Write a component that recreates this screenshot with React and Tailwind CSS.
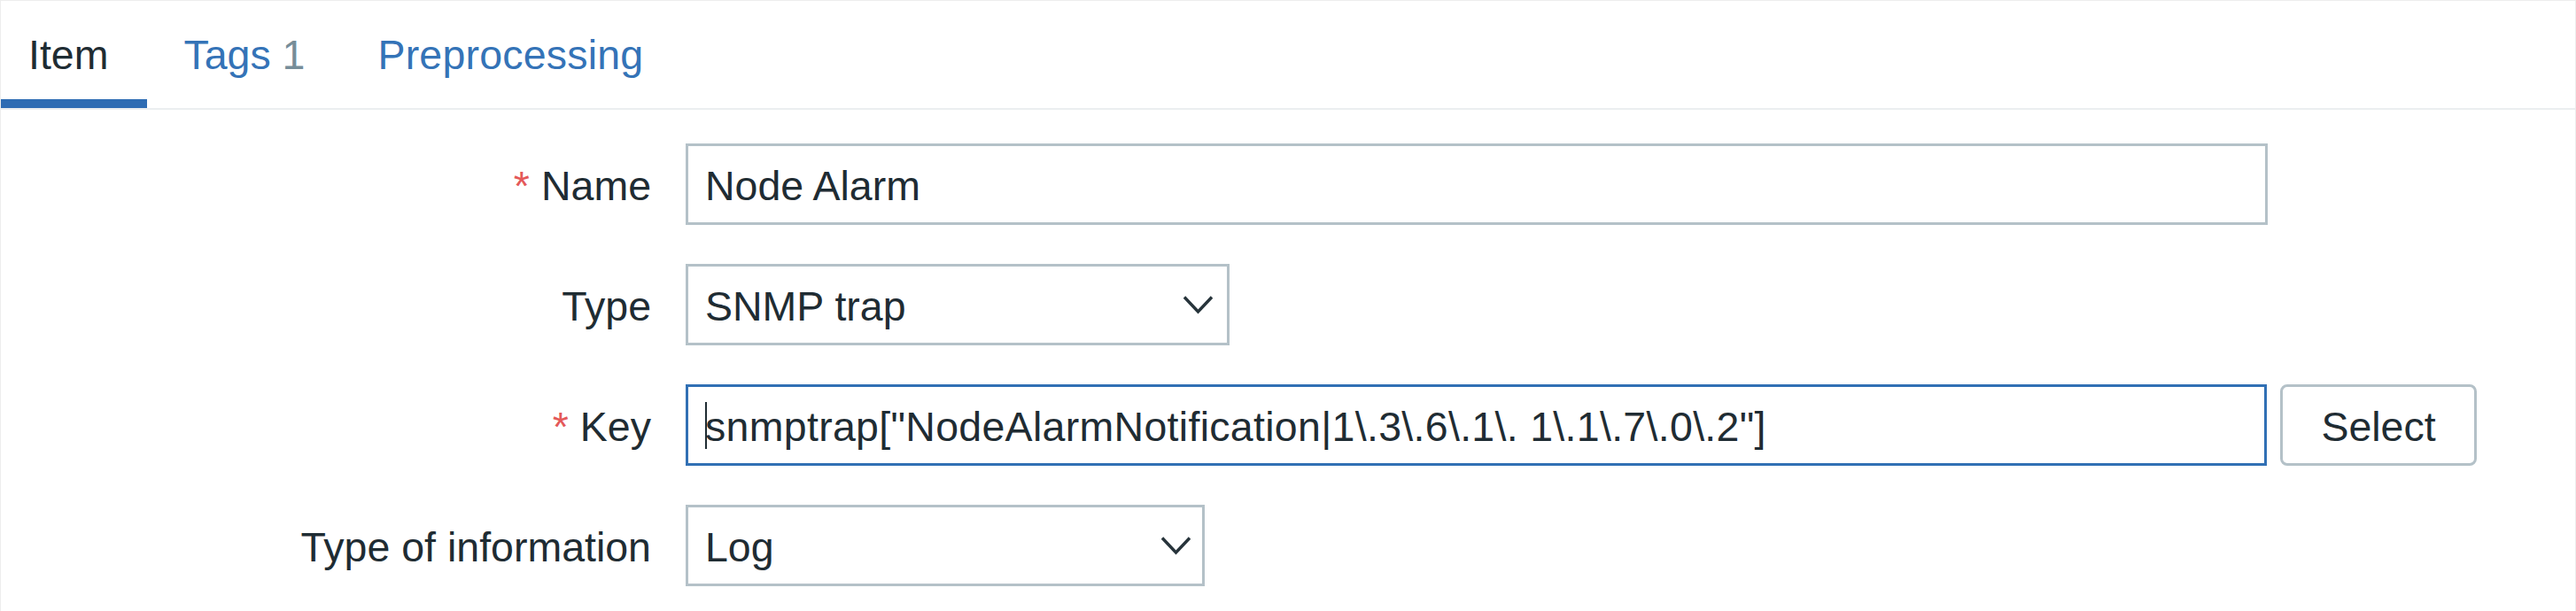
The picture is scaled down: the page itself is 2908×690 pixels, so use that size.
import React from 'react';

const Chevron = () => (
    <svg width="35" height="22" viewBox="0 0 35 22" fill="none" className="-mt-[6px] shrink-0">
        <path d="M2 2.5 L17.5 19 L33 2.5" stroke="#27343b" strokeWidth="3.4" />
    </svg>
);

const Label = ({ children, required }) => (
    <div className="flex h-[92px] items-center justify-end whitespace-nowrap pt-[6px]">
        {required && <span className="mr-[13px] text-[#e45959]">*</span>}
        <span>{children}</span>
    </div>
);

const Select = ({ value, width }) => (
    <div className={`flex h-[92px] items-center justify-between border-[3px] border-[#b4c1c8] bg-white pl-[19px] pt-[6px] ${width}`}>
        <span>{value}</span>
        <Chevron />
    </div>
);

const App = () => {
    return (
        <div className="h-[690px] w-full overflow-hidden border-x border-t border-[#ededed] bg-white font-['Liberation_Sans',Arial,sans-serif] text-[46.5px] text-[#1f2c33]">
            {/* Tabs */}
            <div className="flex border-b-[2px] border-[#ebeef0]">
                <div className="h-[121px] border-b-[10px] border-[#2e6cb3] pl-[31px] pr-[44px] pt-[34px] leading-[54px] text-[#1f2c33]">
                    Item
                </div>
                <div className="h-[121px] pl-[41px] pr-[40px] pt-[34px] leading-[54px] text-[#3473b7]">
                    Tags <span className="text-[#768d99]">1</span>
                </div>
                <div className="h-[121px] pl-[42px] pr-[38px] pt-[34px] leading-[54px] tracking-[0.2px] text-[#3473b7]">
                    Preprocessing
                </div>
            </div>

            {/* Form */}
            <div className="mt-[38px] grid grid-cols-[734px_1fr] gap-x-[39px] gap-y-[44px]">
                <Label required>Name</Label>
                <div className="flex h-[92px] w-[1786px] items-center border-[3px] border-[#b4c1c8] bg-white pl-[19px] pt-[6px]">
                    Node Alarm
                </div>

                <Label>Type</Label>
                <Select value="SNMP trap" width="w-[614px] pr-[15px]" />

                <Label required>Key</Label>
                <div className="flex items-center gap-[15px]">
                    <div className="flex h-[92px] w-[1785px] items-center border-[3px] border-[#3170b4] bg-white pl-[19px]">
                        <span className="-mr-[2px] inline-block h-[53px] w-[2px] bg-[#1f2c33]" />
                        <span className="whitespace-pre pt-[6px] tracking-[0.3px]">snmptrap["NodeAlarmNotification|1\.3\.6\.1\. 1\.1\.7\.0\.2"]</span>
                    </div>
                    <button
                        type="button"
                        className="flex h-[92px] w-[222px] items-center justify-center rounded-[8px] border-[3px] border-[#b4c1c8] bg-white pt-[6px] text-[#1f2c33]"
                    >
                        Select
                    </button>
                </div>

                <Label>Type of information</Label>
                <Select value="Log" width="w-[586px] pr-[12px]" />
            </div>
        </div>
    );
};

export default App;
